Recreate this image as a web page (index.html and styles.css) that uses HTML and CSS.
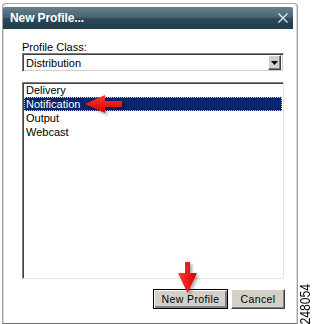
FILE: index.html
```html
<!DOCTYPE html>
<html lang="en">
<head>
    <meta charset="UTF-8">
    <title>New Profile...</title>
    <link rel="stylesheet" href="styles.css">
</head>
<body>
    <div class="dialog">
        <div class="titlebar">
            <span class="title">New Profile...</span>
            <svg class="close" width="10" height="10" viewBox="0 0 10 10">
                <path d="M0.5 0.5 L9.5 9.5 M9.5 0.5 L0.5 9.5" stroke="#dfe8ec" stroke-width="1.4"/>
            </svg>
        </div>
        <div class="content">
            <label class="field-label">Profile Class:</label>
            <div class="select">
                <span class="select-value">Distribution</span>
                <span class="drop-btn">
                    <svg width="7" height="4" viewBox="0 0 7 4"><path d="M0 0 H7 L3.5 4 Z" fill="#000"/></svg>
                </span>
            </div>
            <ul class="listbox">
                <li>Delivery</li>
                <li class="selected">Notification</li>
                <li>Output</li>
                <li>Webcast</li>
            </ul>
            <div class="button-row">
                <button class="btn default">New Profile</button>
                <button class="btn">Cancel</button>
            </div>
        </div>
    </div>
    <div class="side">
        <span class="fig-id">248054</span>
    </div>

    <!-- callout arrows -->
    <svg class="arrow arrow-left" width="50" height="30" viewBox="0 0 50 30">
        <defs>
            <linearGradient id="redH" x1="0" y1="0" x2="0" y2="1">
                <stop offset="0" stop-color="#ff3a2e"/>
                <stop offset="1" stop-color="#d40000"/>
            </linearGradient>
        </defs>
        <path d="M5 14 L25 5 L25 11 L42 11 L42 17 L25 17 L25 23 Z" fill="url(#redH)"/>
    </svg>
    <svg class="arrow arrow-down" width="40" height="45" viewBox="0 0 40 45">
        <defs>
            <linearGradient id="redV" x1="0" y1="0" x2="1" y2="0">
                <stop offset="0" stop-color="#ff3a2e"/>
                <stop offset="1" stop-color="#d40000"/>
            </linearGradient>
        </defs>
        <path d="M15 7 L20 7 L20 18 L27 18 L17.5 38 L8 18 L15 18 Z" fill="url(#redV)"/>
    </svg>
</body>
</html>
```

FILE: styles.css
```css
body {
    margin: 0;
    width: 313px;
    height: 324px;
    background: #fff;
    display: flex;
    font-family: "Liberation Sans", Arial, sans-serif;
    font-size: 11px;
    color: #000;
    overflow: hidden;
}
.dialog {
    margin: 3px 0 0 2px;
    width: 294px;
    height: 316px;
    border: 1px solid #a4a4a4;
    border-bottom: 2px solid #6e6e6e;
    border-radius: 4px 4px 0 0;
    padding-top: 3px;
    background: #fff;
    box-shadow: inset -1px 0 #d8d8d8, inset 1px 0 #d8d8d8;
}
.titlebar {
    height: 22px;
    margin-right: 4px;
    display: flex;
    align-items: center;
    justify-content: space-between;
    padding: 0 5px 0 7px;
    background: linear-gradient(to bottom, #67818e 0, #486472 45%, #2c4856 55%, #213e4c 100%);
    border-radius: 2px 2px 0 0;
}
.title {
    color: #fff;
    font-weight: bold;
    font-size: 12px;
    letter-spacing: -0.1px;
}
.close {
    display: block;
}
.content {
    width: 262px;
    margin-left: 19px;
}
.field-label {
    display: block;
    margin-top: 12px;
    height: 12px;
    line-height: 12px;
}
.select {
    height: 17px;
    border: 1px solid;
    border-color: #808080 #fff #fff #808080;
    box-shadow: inset 1px 1px #404040, inset -1px -1px #d4d0c8;
    display: flex;
    align-items: center;
    justify-content: space-between;
    padding: 0 2px 0 3px;
}
.drop-btn {
    width: 11px;
    height: 13px;
    background: #d4d0c8;
    border: 1px solid;
    border-color: #fff #404040 #404040 #fff;
    box-shadow: inset -1px -1px #808080;
    display: flex;
    align-items: center;
    justify-content: center;
}
.listbox {
    list-style: none;
    margin: 10px 0 0;
    padding: 0 1px 0 1px;
    height: 195px;
    border: 1px solid;
    border-color: #808080 #e4e4e4 #e4e4e4 #808080;
    box-shadow: inset 1px 1px #404040;
}
.listbox li {
    height: 14px;
    line-height: 14px;
    padding-left: 2px;
}
.listbox li.selected {
    background: #0a246a;
    color: #fff;
    outline: 1px dotted #c8c8c8;
    outline-offset: -1px;
}
.button-row {
    display: flex;
    justify-content: flex-end;
    gap: 3px;
    margin-top: 10px;
    margin-right: -1px;
}
.btn {
    height: 20px;
    padding: 0;
    background: #d4d0c8;
    font-family: "Liberation Sans", Arial, sans-serif;
    font-size: 10.5px;
    letter-spacing: 0.4px;
    color: #000;
    border: 1px solid;
    border-color: #fff #404040 #404040 #fff;
    box-shadow: inset -1px -1px #808080;
}
.btn.default {
    width: 75px;
    border-color: #000;
    box-shadow: inset 1px 1px #fff, inset -2px -2px #808080;
}
.btn:not(.default) {
    width: 54px;
}
.side {
    flex: 1;
    display: flex;
    align-items: flex-end;
    justify-content: center;
}
.fig-id {
    writing-mode: vertical-rl;
    transform: rotate(180deg) scaleY(0.84);
    margin-bottom: -4px;
    font-size: 14.5px;
    line-height: 13px;
}
.arrow {
    position: absolute;
    filter: drop-shadow(2px 2px 1.5px rgba(0, 0, 0, 0.35));
}
.arrow-left {
    left: 80px;
    top: 90px;
}
.arrow-down {
    left: 170px;
    top: 255px;
}
```
